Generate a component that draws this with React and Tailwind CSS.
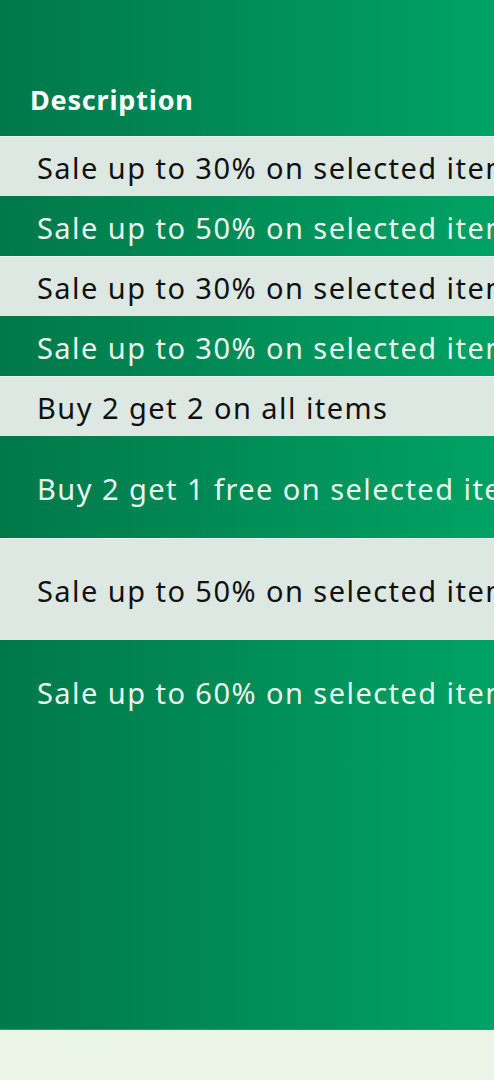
const rows = [
  { text: 'Sale up to 30% on selected items', light: true, tall: false },
  { text: 'Sale up to 50% on selected items', light: false, tall: false },
  { text: 'Sale up to 30% on selected items', light: true, tall: false },
  { text: 'Sale up to 30% on selected items', light: false, tall: false },
  { text: 'Buy 2 get 2 on all items', light: true, tall: false },
  { text: 'Buy 2 get 1 free on selected items', light: false, tall: true },
  { text: 'Sale up to 50% on selected items', light: true, tall: true },
  { text: 'Sale up to 60% on selected items', light: false, tall: true },
];

export default function App() {
  return (
    <div className="w-[494px] min-h-[1080px] bg-[#eaf5e8] overflow-hidden" style={{ fontFamily: '"Noto Sans", "DejaVu Sans", sans-serif' }}>
      <div className="h-[1030px] bg-gradient-to-r from-[#00784a] to-[#00a264] border-b border-[#3c8f68]">
        <div className="h-[136px] flex items-end pb-[23px] pl-[30px]">
          <h2 className="text-[27px] font-bold text-white leading-none tracking-[0.03em]">Description</h2>
        </div>
        <ul>
          {rows.map((row, i) => (
            <li
              key={i}
              className={`flex items-center pl-[37px] pt-[3px] whitespace-nowrap overflow-hidden text-[29px] tracking-[0.05em] ${
                row.tall ? 'h-[102px]' : 'h-[60px]'
              } ${
                row.light
                  ? 'bg-[#dde8e3] text-[#111] border-t border-[#eef5f1]'
                  : 'text-[#e8f6ee]'
              }`}
            >
              {row.text}
            </li>
          ))}
        </ul>
      </div>
    </div>
  );
}
